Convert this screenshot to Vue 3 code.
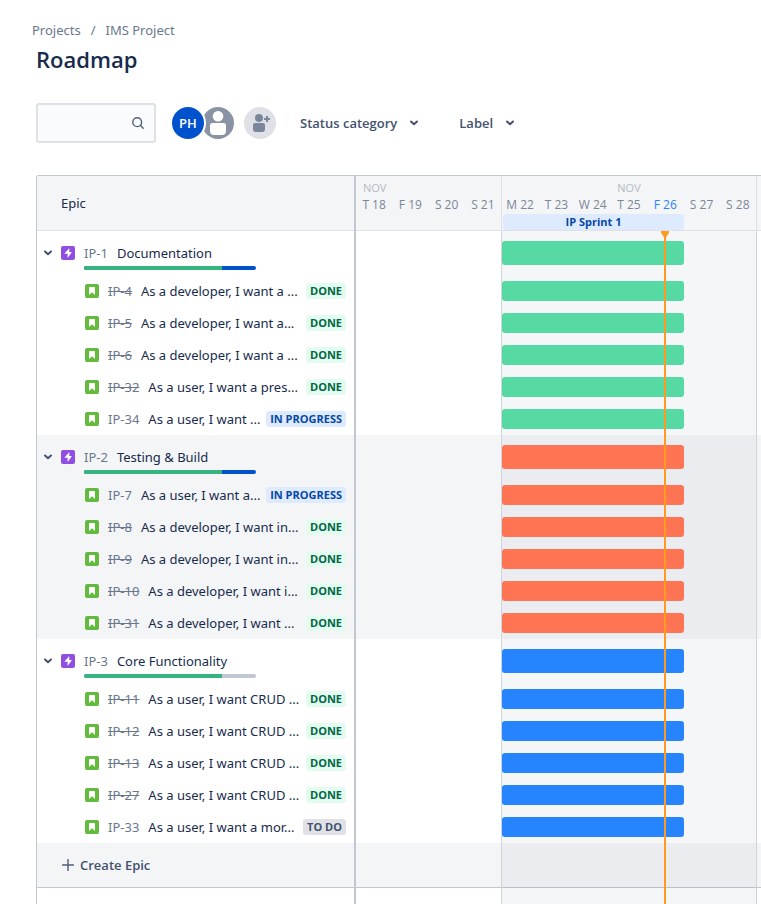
<script setup>
import { ref } from 'vue'

const search = ref('')

const labels = { done: 'DONE', progress: 'IN PROGRESS', todo: 'TO DO' }

const epics = ref([
  {
    key: 'IP-1', title: 'Documentation', color: 'green', rest: 'blue', done: 80, open: true,
    stories: [
      { key: 'IP-4', title: 'As a developer, I want a ...', status: 'done', closed: true },
      { key: 'IP-5', title: 'As a developer, I want a...', status: 'done', closed: true },
      { key: 'IP-6', title: 'As a developer, I want a ...', status: 'done', closed: true },
      { key: 'IP-32', title: 'As a user, I want a pres...', status: 'done', closed: true },
      { key: 'IP-34', title: 'As a user, I want ...', status: 'progress', closed: false },
    ],
  },
  {
    key: 'IP-2', title: 'Testing & Build', color: 'orange', rest: 'blue', done: 80, open: true,
    stories: [
      { key: 'IP-7', title: 'As a user, I want a...', status: 'progress', closed: false },
      { key: 'IP-8', title: 'As a developer, I want in...', status: 'done', closed: true },
      { key: 'IP-9', title: 'As a developer, I want in...', status: 'done', closed: true },
      { key: 'IP-10', title: 'As a developer, I want i...', status: 'done', closed: true },
      { key: 'IP-31', title: 'As a developer, I want ...', status: 'done', closed: true },
    ],
  },
  {
    key: 'IP-3', title: 'Core Functionality', color: 'azure', rest: 'grey', done: 80, open: true,
    stories: [
      { key: 'IP-11', title: 'As a user, I want CRUD ...', status: 'done', closed: true },
      { key: 'IP-12', title: 'As a user, I want CRUD ...', status: 'done', closed: true },
      { key: 'IP-13', title: 'As a user, I want CRUD ...', status: 'done', closed: true },
      { key: 'IP-27', title: 'As a user, I want CRUD ...', status: 'done', closed: true },
      { key: 'IP-33', title: 'As a user, I want a mor...', status: 'todo', closed: false },
    ],
  },
])

const firstDays = ['T 18', 'F 19', 'S 20', 'S 21']
const sprintDays = ['M 22', 'T 23', 'W 24', 'T 25', 'F 26', 'S 27', 'S 28']
</script>

<template>
  <div class="page">
    <header class="top">
      <nav class="crumbs" aria-label="Breadcrumb">
        <a href="#projects">Projects</a>
        <span>/</span>
        <a href="#ims">IMS Project</a>
      </nav>
      <h1>Roadmap</h1>
      <div class="tools">
        <label class="search">
          <input v-model="search" type="text" aria-label="Search roadmap" />
          <svg width="14" height="14" viewBox="0 0 14 14" aria-hidden="true">
            <circle cx="6.2" cy="6.2" r="4.4" />
            <path d="M9.6 9.6L12.2 12.2" />
          </svg>
        </label>
        <div class="people">
          <button class="avatar me" type="button">PH</button>
          <button class="avatar nobody" type="button" aria-label="Unassigned">
            <svg width="32" height="32" viewBox="0 0 32 32" aria-hidden="true">
              <circle cx="16" cy="9.3" r="5.3" />
              <path d="M8 18.5a2.5 2.5 0 0 1 2.5-2.5h11a2.5 2.5 0 0 1 2.5 2.5V24a4 4 0 0 1-4 4h-8a4 4 0 0 1-4-4z" />
            </svg>
          </button>
          <button class="avatar add" type="button" aria-label="Add people">
            <svg width="32" height="32" viewBox="0 0 32 32" aria-hidden="true">
              <circle cx="15" cy="11" r="4" />
              <path d="M9 18a2 2 0 0 1 2-2h8a2 2 0 0 1 2 2v4a3 3 0 0 1-3 3h-6a3 3 0 0 1-3-3z" />
              <path d="M22 9h2v2h2v2h-2v2h-2v-2h-2v-2h2z" />
            </svg>
          </button>
        </div>
        <button class="filter" type="button">
          Status category
          <svg class="chev" width="10" height="6" viewBox="0 0 10 6" aria-hidden="true"><path d="M2 1.5L5 4.2L8 1.5" /></svg>
        </button>
        <button class="filter label" type="button">
          Label
          <svg class="chev" width="10" height="6" viewBox="0 0 10 6" aria-hidden="true"><path d="M2 1.5L5 4.2L8 1.5" /></svg>
        </button>
      </div>
    </header>

    <main class="board">
      <section class="pane">
        <div class="head epic-head">Epic</div>
        <div v-for="epic in epics" :key="epic.key" class="group">
          <div class="epic">
            <button class="toggle" type="button" :aria-label="'Toggle ' + epic.key" @click="epic.open = !epic.open">
              <svg class="chev" width="10" height="6" viewBox="0 0 10 6" aria-hidden="true"><path d="M2 1.5L5 4.2L8 1.5" /></svg>
            </button>
            <svg class="type" width="14" height="14" viewBox="0 0 14 14" aria-hidden="true">
              <rect width="14" height="14" rx="2" fill="#904ee2" />
              <path d="M7.9 2.4L3.7 7.3a.3.3 0 0 0 .2.5h2.7v3.6c0 .3.3.3.4.1l3.6-4.9a.3.3 0 0 0-.2-.5H8.3V2.6c0-.3-.2-.4-.4-.2z" fill="#fff" />
            </svg>
            <div class="epic-body">
              <div class="line"><span class="key">{{ epic.key }}</span><span>{{ epic.title }}</span></div>
              <div class="progress" :class="epic.rest"><i :style="{ width: epic.done + '%' }"></i></div>
            </div>
          </div>
          <ul v-if="epic.open">
            <li v-for="s in epic.stories" :key="s.key" class="story">
              <svg class="type" width="14" height="14" viewBox="0 0 14 14" aria-hidden="true">
                <rect width="14" height="14" rx="2" fill="#63ba3c" />
                <path d="M4 4a1 1 0 0 1 1-1h4a1 1 0 0 1 1 1v7L7 8.3L4 11z" fill="#fff" />
              </svg>
              <span class="key" :class="{ closed: s.closed }">{{ s.key }}</span>
              <span class="title">{{ s.title }}</span>
              <span class="badge" :class="s.status">{{ labels[s.status] }}</span>
            </li>
          </ul>
        </div>
        <div class="create">
          <button type="button">
            <svg width="12" height="12" viewBox="0 0 12 12" aria-hidden="true"><path d="M6 0.5V11.5M0.5 6H11.5" /></svg>
            Create Epic
          </button>
        </div>
      </section>

      <section class="chart">
        <div class="head dates">
          <div class="week first">
            <div class="month">NOV</div>
            <div class="days"><span v-for="d in firstDays" :key="d">{{ d }}</span></div>
          </div>
          <div class="week sprint-week">
            <div class="month">NOV</div>
            <div class="days"><span v-for="d in sprintDays" :key="d" :class="{ today: d === 'F 26' }">{{ d }}</span></div>
            <div class="sprint">IP Sprint 1</div>
          </div>
        </div>
        <div class="lanes">
          <div v-for="epic in epics" :key="epic.key" class="group" :class="epic.color">
            <div class="lane big"><div class="bar"></div></div>
            <template v-if="epic.open">
              <div v-for="s in epic.stories" :key="s.key" class="lane"><div class="bar"></div></div>
            </template>
          </div>
          <div class="create"></div>
          <div class="shade"></div>
          <div class="now">
            <svg width="10" height="7" viewBox="0 0 10 7" aria-hidden="true"><path d="M1 0H9V1.5L6 6.5H4L1 1.5z" /></svg>
          </div>
        </div>
      </section>
    </main>
  </div>
</template>

<style>
body {
  margin: 0;
  background: #fff;
}
</style>

<style scoped>
* {
  box-sizing: border-box;
}
.page {
  display: flex;
  flex-direction: column;
  min-height: 100vh;
  overflow: hidden;
  color: #172b4d;
  font-family: "Noto Sans", "Open Sans", sans-serif;
  font-size: 13px;
  line-height: 20px;
}
button {
  padding: 0;
  border: 0;
  background: none;
  color: inherit;
  font: inherit;
  cursor: pointer;
}
.top {
  padding: 20px 36px 32px;
}
.crumbs {
  display: flex;
  gap: 10px;
  margin-left: -4px;
  color: #6b778c;
}
.crumbs a {
  color: inherit;
  text-decoration: none;
}
h1 {
  margin: 5px 0 30px;
  font-family: "Open Sans", sans-serif;
  font-size: 22px;
  font-weight: 600;
  line-height: 28px;
}
.tools {
  display: flex;
  align-items: center;
  color: #42526e;
}
.search {
  display: flex;
  align-items: center;
  width: 120px;
  height: 40px;
  padding: 0 9px 0 6px;
  border: 2px solid #dfe1e6;
  border-radius: 3px;
  background: #fafbfc;
}
.search input {
  flex: 1;
  min-width: 0;
  border: 0;
  outline: 0;
  background: transparent;
  color: #172b4d;
  font: inherit;
}
.search svg,
.create svg {
  fill: none;
  stroke: #505f79;
  stroke-width: 1.4;
  stroke-linecap: round;
}
.people {
  display: flex;
  margin: 0 24px 0 16px;
}
.avatar {
  width: 32px;
  height: 32px;
  border-radius: 50%;
}
.avatar svg {
  display: block;
}
.me {
  z-index: 1;
  background: #0052cc;
  box-shadow: 0 0 0 2px #fff;
  color: #fff;
  font-family: "Open Sans", sans-serif;
  font-weight: 600;
}
.nobody {
  margin-left: -2px;
  background: #8993a4;
  fill: #fff;
}
.add {
  margin-left: 10px;
  background: #dfe1e6;
  fill: #7a869a;
}
.filter {
  display: flex;
  align-items: center;
  gap: 12px;
  font-family: "Open Sans", sans-serif;
  font-weight: 600;
  white-space: nowrap;
}
.label {
  margin-left: 40px;
}
.chev {
  fill: none;
  stroke: #42526e;
  stroke-width: 2;
  stroke-linecap: round;
  stroke-linejoin: round;
}
.board {
  display: flex;
  flex: 1;
  margin-left: 36px;
  border-top: 1px solid #c1c7d0;
  border-left: 1px solid #c1c7d0;
  border-top-left-radius: 3px;
}
.pane {
  width: 319px;
  flex: none;
  border-right: 2px solid #c1c7d0;
}
.head {
  height: 55px;
  border-bottom: 1px solid #dfe1e6;
  background: #f4f5f7;
}
.epic-head {
  padding: 17px 24px;
  border-top-left-radius: 2px;
}
.group:nth-of-type(odd) {
  background: #fff;
}
.pane .group:nth-of-type(3),
.lanes .group:nth-of-type(2) {
  background: #f4f5f7;
}
.epic {
  display: flex;
  height: 44px;
  padding: 12px 0 0 5px;
}
.toggle {
  display: flex;
  align-items: center;
  justify-content: center;
  width: 12px;
  height: 20px;
  margin-right: 7px;
}
.type {
  flex: none;
}
.epic .type {
  margin-top: 3px;
}
.epic-body {
  width: 172px;
  margin-left: 9px;
}
.line {
  display: flex;
  gap: 9px;
  white-space: nowrap;
}
.key {
  color: #6b778c;
}
.closed {
  text-decoration: line-through;
}
.progress {
  display: flex;
  height: 4px;
  margin-top: 3px;
  overflow: hidden;
  border-radius: 2px;
}
.progress i {
  background: #36b37e;
}
.blue {
  background: #0052cc;
}
.grey {
  background: #c1c7d0;
}
ul {
  margin: 0;
  padding: 0;
  list-style: none;
}
.story {
  display: flex;
  align-items: center;
  height: 32px;
  padding: 0 8px 0 48px;
  white-space: nowrap;
}
.story .key {
  margin: 0 9px;
}
.badge {
  margin-left: auto;
  padding: 0 4px;
  border-radius: 3px;
  font-family: "Open Sans", sans-serif;
  font-size: 11px;
  font-weight: 700;
  line-height: 16px;
}
.done {
  background: #e3fcef;
  color: #006644;
}
.badge.progress {
  display: block;
  height: auto;
  margin-top: 0;
  background: #deebff;
  color: #0747a6;
}
.todo {
  background: #dfe1e6;
  color: #42526e;
}
.create {
  height: 45px;
  padding: 12px 25px;
  border-bottom: 1px solid #c1c7d0;
  background: #f4f5f7;
}
.create button {
  display: flex;
  align-items: center;
  gap: 6px;
  color: #42526e;
  font-family: "Open Sans", sans-serif;
  font-weight: 600;
}
.chart {
  display: flex;
  flex: 1;
  flex-direction: column;
  min-width: 0;
  overflow: hidden;
}
.dates {
  display: flex;
  font-family: "Open Sans", sans-serif;
}
.week {
  flex: none;
  padding-top: 5px;
  color: #7a869a;
  font-size: 12px;
}
.first {
  width: 145px;
}
.sprint-week {
  width: 256px;
  border-right: 1px solid #dfe1e6;
  border-left: 1px solid #dfe1e6;
}
.month {
  color: #b3bac5;
  font-size: 11px;
  line-height: 14px;
  text-align: center;
}
.first .month {
  padding-left: 7px;
  text-align: left;
}
.days {
  display: flex;
  line-height: 19px;
}
.days span {
  flex: 1;
  text-align: center;
  white-space: nowrap;
}
.days .today {
  color: #2684ff;
}
.sprint {
  width: 181px;
  margin-left: 1px;
  border-radius: 3px;
  background: #deebff;
  color: #0747a6;
  font-size: 11px;
  font-weight: 700;
  line-height: 16px;
  text-align: center;
}
.lanes {
  position: relative;
  flex: 1;
}
.lane {
  display: flex;
  height: 32px;
  padding: 6px 0 6px 146px;
}
.big {
  height: 44px;
  padding-top: 10px;
  padding-bottom: 10px;
}
.bar {
  z-index: 1;
  width: 182px;
  border-radius: 3px;
}
.green .bar {
  background: #57d9a3;
}
.orange .bar {
  background: #ff7452;
}
.azure .bar {
  background: #2684ff;
}
.shade {
  position: absolute;
  top: 0;
  bottom: 0;
  left: 145px;
  width: 256px;
  border-right: 1px solid #d0d4db;
  border-left: 1px solid #d0d4db;
  background: rgba(9, 30, 66, 0.04);
}
.now {
  position: absolute;
  z-index: 2;
  top: 0;
  bottom: 0;
  left: 304px;
  width: 10px;
  background: linear-gradient(#ff991f, #ff991f) center / 2px 100% no-repeat;
}
.now svg {
  display: block;
  fill: #ff991f;
}
</style>
